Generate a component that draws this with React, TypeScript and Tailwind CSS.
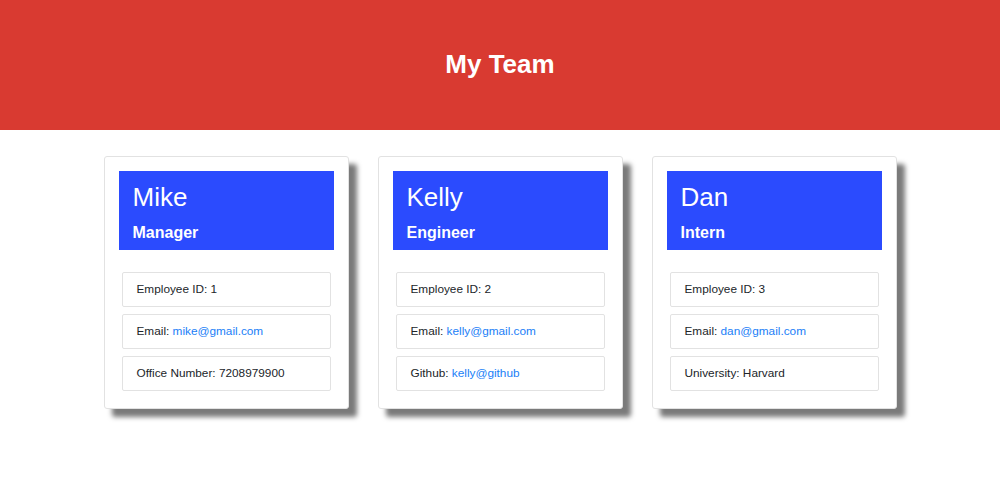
import React from "react";

type Person = {
  name: string;
  role: string;
  id: number;
  email: string;
  extraLabel: string;
  extraValue: string;
  extraLink?: boolean;
};

const team: Person[] = [
  { name: "Mike", role: "Manager", id: 1, email: "mike@gmail.com", extraLabel: "Office Number", extraValue: "7208979900" },
  { name: "Kelly", role: "Engineer", id: 2, email: "kelly@gmail.com", extraLabel: "Github", extraValue: "kelly@github", extraLink: true },
  { name: "Dan", role: "Intern", id: 3, email: "dan@gmail.com", extraLabel: "University", extraValue: "Harvard" },
];

function Card({ p }: { p: Person }) {
  return (
    <div className="w-[245px] bg-white border border-[#e2e2e2] rounded-[3px] p-[14px] pb-[17px] shadow-[8px_8px_5px_#7a7a7a]">
      <div className="bg-[#2b4bfe] text-white h-[79px] px-[14px] pt-[11px]">
        <div className="text-[26px] leading-[30px]">{p.name}</div>
        <div className="text-[16px] leading-[20px] font-bold mt-[11px]">{p.role}</div>
      </div>
      <div className="mt-[22px] mx-[3px] flex flex-col gap-[7px] text-[11.8px] text-[#212529]">
        <div className="h-[35px] flex items-center px-[14px] border border-[#e2e2e2] rounded-[2px]">
          Employee ID: {p.id}
        </div>
        <div className="h-[35px] flex items-center px-[14px] border border-[#e2e2e2] rounded-[2px]">
          Email:&nbsp;<span className="text-[#1a7ef7]">{p.email}</span>
        </div>
        <div className="h-[35px] flex items-center px-[14px] border border-[#e2e2e2] rounded-[2px]">
          {p.extraLabel}:&nbsp;
          {p.extraLink ? <span className="text-[#1a7ef7]">{p.extraValue}</span> : <span>{p.extraValue}</span>}
        </div>
      </div>
    </div>
  );
}

export default function App() {
  return (
    <div className="min-h-[491px] bg-white" style={{ fontFamily: '"Liberation Sans", Arial, sans-serif' }}>
      <header className="h-[130px] bg-[#d93a31] flex items-center justify-center">
        <h1 className="text-white text-[26px] font-bold leading-none -mt-[3px]">My Team</h1>
      </header>
      <main className="flex justify-center gap-[29px] pt-[26px]">
        {team.map((p) => (
          <Card key={p.name} p={p} />
        ))}
      </main>
    </div>
  );
}
